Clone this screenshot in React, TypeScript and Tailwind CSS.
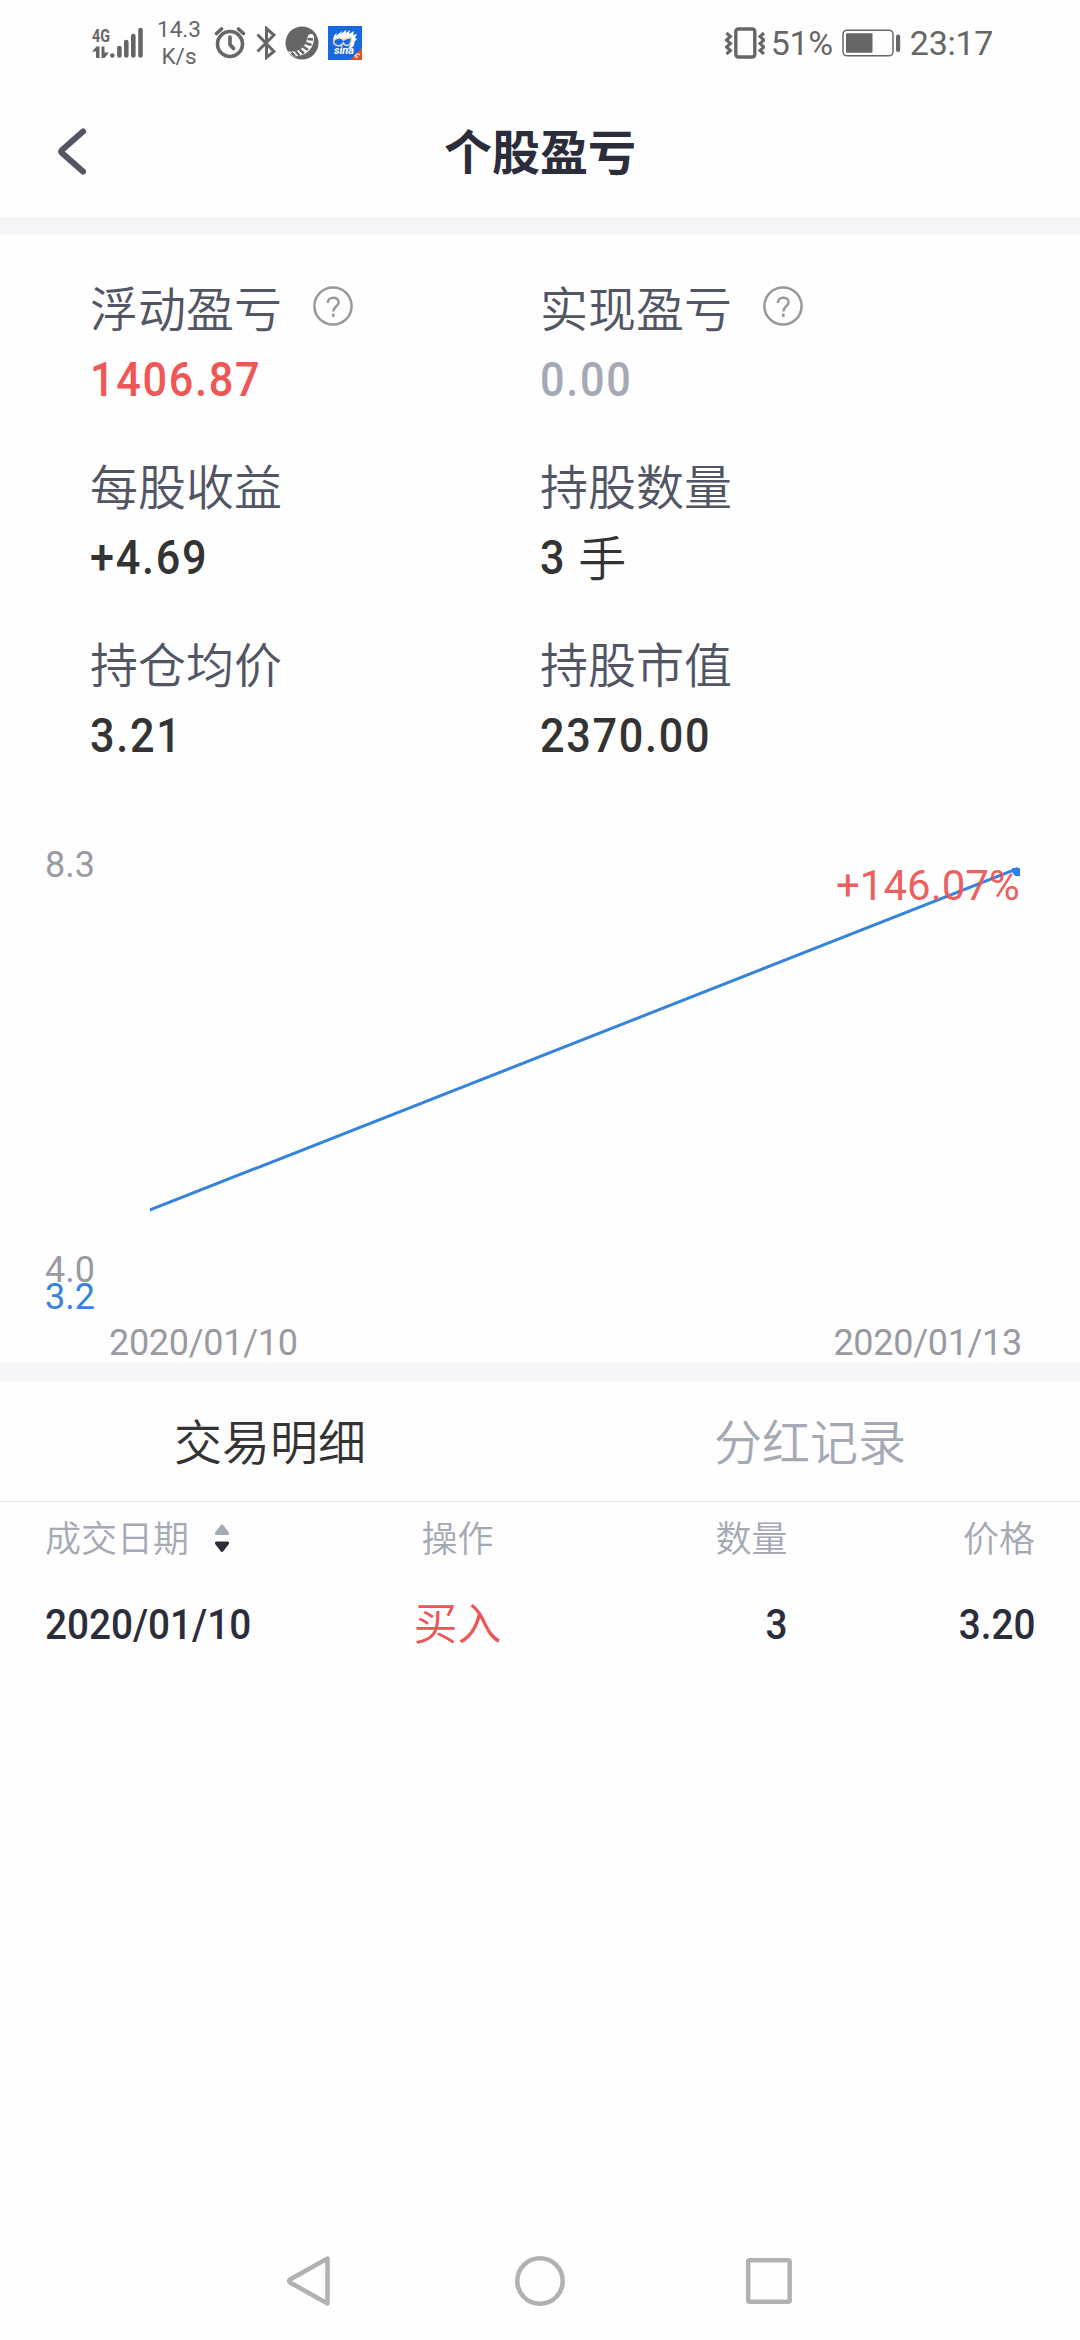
interface Stat {
  label: string;
  value: string;
  unit?: string;
  help?: boolean;
  tone?: "up" | "flat";
}

const stats: Stat[] = [
  { label: "浮动盈亏", value: "1406.87", help: true, tone: "up" },
  { label: "实现盈亏", value: "0.00", help: true, tone: "flat" },
  { label: "每股收益", value: "+4.69" },
  { label: "持股数量", value: "3", unit: "手" },
  { label: "持仓均价", value: "3.21" },
  { label: "持股市值", value: "2370.00" },
];

const trades = [
  { date: "2020/01/10", action: "买入", amount: "3", price: "3.20" },
];

export default function App() {
  return (
    <div className="flex h-[2340px] w-[1080px] flex-col overflow-hidden bg-[#fefefe] font-['Roboto','Noto_Sans_CJK_SC',sans-serif]">
      <StatusBar />
      <header className="grid h-[132px] shrink-0 grid-cols-[1fr_auto_1fr] items-center pl-[56px]">
        <BackIcon />
        <h1 className="-ml-[56px] pt-[6px] text-[48px] leading-none font-bold text-[#2b2d3a]">
          个股盈亏
        </h1>
      </header>
      <Divider />
      <section className="grid h-[565px] shrink-0 grid-cols-[450px_1fr] content-start pt-[37px] pl-[90px]">
        {stats.map((stat) => (
          <StatCell key={stat.label} {...stat} />
        ))}
      </section>
      <ProfitChart />
      <Divider />
      <Tabs />
      <TradeTable />
      <NavBar />
    </div>
  );
}

function Divider() {
  return <div className="h-[18px] shrink-0 bg-[#f6f6f9]" />;
}

function StatCell({ label, value, unit, help, tone }: Stat) {
  const color =
    tone === "up"
      ? "text-[#f05656]"
      : tone === "flat"
        ? "text-[#a5a9b4]"
        : "text-[#333333]";
  return (
    <div className="h-[178px]">
      <div className="flex h-[72px] items-center gap-[31px] text-[48px] leading-none font-[350] text-[#525564]">
        <span className="pt-[5px]">{label}</span>
        {help && <HelpIcon />}
      </div>
      <div
        className={`flex h-[70px] items-center gap-[9px] pt-[2px] text-[48px] leading-none font-medium ${color}`}
      >
        <span className="origin-left scale-x-90 tracking-[1.9px]">{value}</span>
        {unit && <span className="pt-[3px] font-[350]">{unit}</span>}
      </div>
    </div>
  );
}

function ProfitChart() {
  return (
    <svg
      className="h-[563px] w-[1080px] shrink-0"
      viewBox="0 800 1080 563"
      fontSize="36"
      fill="#999aa2"
    >
      <clipPath id="plot">
        <rect x="150" y="800" width="870" height="520" />
      </clipPath>
      <text x="45" y="877">8.3</text>
      <text x="45" y="1282">4.0</text>
      <text x="45" y="1308.500" fill="#3583dc">3.2</text>
      <text x="109" y="1355" letterSpacing="-0.3">2020/01/10</text>
      <text x="1022" y="1355" letterSpacing="-0.3" textAnchor="end">2020/01/13</text>
      <g clipPath="url(#plot)">
        <path d="M146 1211.500 1018 868.500" stroke="#3583dc" strokeWidth="3" />
        <path d="M1012 868h10v8h-7l-3-4Z" fill="#2b82ee" />
        <text x="836" y="900" fontSize="42" fill="#ec5656" fillOpacity="0.95">
          +146.07%
        </text>
      </g>
    </svg>
  );
}

function Tabs() {
  return (
    <div className="grid h-[121px] shrink-0 grid-cols-2 items-center border-b border-[#e6e6e8] pt-[6px] text-center text-[48px] leading-none font-[350]">
      <button className="text-[#333333]">交易明细</button>
      <button className="text-[#a5a9b4]">分红记录</button>
    </div>
  );
}

function TradeTable() {
  return (
    <div className="flex-1 px-[45px]">
      <div className="grid h-[72px] grid-cols-[4fr_2fr_3fr_3fr] items-center text-[36px] leading-none font-[350] text-[#a5a9b4]">
        <span className="flex items-center gap-[25px]">
          <span className="pt-[3px]">成交日期</span>
          <SortIcon />
        </span>
        <span className="pt-[3px] text-center">操作</span>
        <span className="pt-[3px] text-right">数量</span>
        <span className="pt-[3px] text-right">价格</span>
      </div>
      {trades.map((t) => (
        <div
          key={t.date}
          className="grid h-[100px] grid-cols-[4fr_2fr_3fr_3fr] items-center text-[43px] leading-none font-medium text-[#2b2d3a]"
        >
          <span className="origin-left scale-x-90">{t.date}</span>
          <span className="pt-[2px] text-center text-[44px] font-[350] text-[#ec5656]">
            {t.action}
          </span>
          <span className="origin-right scale-x-90 text-right">{t.amount}</span>
          <span className="origin-right scale-x-90 text-right">{t.price}</span>
        </div>
      ))}
    </div>
  );
}

function StatusBar() {
  return (
    <div className="flex h-[85px] shrink-0 items-center justify-between pr-[87px] pl-[91px] text-[#666666]">
      <div className="flex items-center">
        <SignalIcon />
        <div className="ml-[12px] w-[46px] text-center text-[22.500px] leading-[27px]">
          <div>14.3</div>
          <div>K/s</div>
        </div>
        <AlarmIcon />
        <BluetoothIcon />
        <CentipedeIcon />
        <SinaIcon />
      </div>
      <div className="flex items-center text-[34px] leading-none">
        <VibrateIcon />
        <span className="ml-[6px] w-[64px] tracking-[-0.4px]">51%</span>
        <BatteryIcon />
        <span className="ml-[8px] tracking-[-0.3px]">23:17</span>
      </div>
    </div>
  );
}

function NavBar() {
  return (
    <nav className="flex h-[118px] shrink-0 items-center justify-between px-[285px]">
      <svg className="h-[52px] w-[52px]" viewBox="0 0 52 52" fill="none" stroke="#b1b1b1" strokeWidth="4.500" strokeLinejoin="round">
        <path d="M42.500 3.500v45L5 27.500q-2-1.500 0-3Z" />
      </svg>
      <svg className="h-[52px] w-[52px]" viewBox="0 0 52 52" fill="none" stroke="#b1b1b1" strokeWidth="4.500">
        <circle cx="26" cy="26" r="22.700" />
      </svg>
      <svg className="h-[52px] w-[52px]" viewBox="0 0 52 52" fill="none" stroke="#b1b1b1" strokeWidth="4.500">
        <rect x="5.200" y="5.200" width="41.500" height="41.500" rx="1.500" />
      </svg>
    </nav>
  );
}

function BackIcon() {
  return (
    <svg className="h-[50px] w-[32px]" viewBox="0 0 32 50" fill="none" stroke="#525564" strokeWidth="6" strokeLinecap="round" strokeLinejoin="round">
      <path d="M27 5.500 6 24q-1.500 1.500 0 3L27 45.500" />
    </svg>
  );
}

function HelpIcon() {
  return (
    <svg className="-mt-[4px] h-[40px] w-[40px]" viewBox="0 0 40 40" fill="none" stroke="#999999" strokeWidth="2.500">
      <circle cx="20" cy="20" r="18.600" />
      <path d="M14.800 17c0-7 10.800-7 10.800-.7 0 4-5.300 4-5.300 9.200M20.300 27.500v3.400" />
    </svg>
  );
}

function SortIcon() {
  return (
    <svg className="h-[30px] w-[16px]" viewBox="0 0 16 30">
      <path d="M8 1.500q.8 0 1.500 1l5 6.500q1.500 3-1 3h-11q-2.500 0-1-3l5-6.500q.7-1 1.500-1Z" fill="#a5a9b4" />
      <path d="M8 29q-.8 0-1.500-1l-5-6.500q-1.500-3 1-3h11q2.500 0 1 3l-5 6.500q-.7 1-1.500 1Z" fill="#2b2d3a" />
    </svg>
  );
}

function SignalIcon() {
  return (
    <svg className="h-[34px] w-[53px]" viewBox="0 0 53 34" fill="currentColor">
      <text x="1" y="15.500" fontSize="19" fontWeight="700" textLength="18" lengthAdjust="spacingAndGlyphs">
        4G
      </text>
      <path d="M1 25.500 5.500 20.500H8.500V32H5V25.500H1ZM10.500 20.500h3v6h4.500l-4.500 5.500h-3Z" />
      <g stroke="currentColor" strokeWidth="4.600" strokeLinecap="round">
        <path d="M21.300 29.500v0M28.400 22v7.500M35.300 16v13.500M42.300 10v19.500M49.500 4v25.500" />
      </g>
    </svg>
  );
}

function AlarmIcon() {
  return (
    <svg className="ml-[12px] h-[34px] w-[32px]" viewBox="0 0 32 34" fill="none" stroke="currentColor" strokeWidth="3.600" strokeLinecap="round">
      <circle cx="16" cy="18" r="12.500" />
      <path d="M16 11v7.500l3.500 4M2.500 7.500 7.500 3M29.500 7.500 24.500 3" />
    </svg>
  );
}

function BluetoothIcon() {
  return (
    <svg className="ml-[10px] h-[34px] w-[20px]" viewBox="0 0 20 34" fill="none" stroke="currentColor" strokeWidth="3">
      <path d="M1.500 8.500 18 25.500 10.500 31.500V2.500L18 9 1.500 25.500" />
    </svg>
  );
}

function CentipedeIcon() {
  return (
    <svg className="ml-[9px] h-[34px] w-[34px]" viewBox="0 0 34 34" fill="none">
      <circle cx="17" cy="17" r="16.500" fill="currentColor" />
      <path d="M2.500 25.500Q20 27 22.500 11q1-3.500 4-3 3 .5 2.500 5.500-2 16-20.500 17" fill="#fefefe" />
      <path d="m6.500 26.500 3.500 3.500M10.500 25l4 4.500M14.500 23.500l4.500 4M18 20.500l5 3.500M20.500 17l6 2M22.500 13l5.500 .5" stroke="currentColor" strokeWidth="2.400" />
    </svg>
  );
}

function SinaIcon() {
  return (
    <svg className="ml-[9px] h-[34px] w-[34px]" viewBox="0 0 34 34">
      <rect width="34" height="34" fill="#1769e0" />
      <path d="M5 15q0-6 4-8l-1 3 6-5-1 3 5-4v3l4-3-1 4 5-3-1 4 4-1-2 4 2 1-2.500 3q0 7-7.500 7 4-3 3.500-7-7-5-17.500-1Z" fill="#fff" />
      <path d="M6 14q6-4 9.500 0 3.500-2.500 8-2 0 7-4.500 7.500-2.500 0-3.500-2.500-2.500 3.500-6.500 2.500Q4.500 18 6 14Z" fill="#1769e0" stroke="#e8d8bd" strokeWidth="1.600" />
      <path d="M22 34 34 22V34Z" fill="#e2501c" />
      <path d="m26.500 30.500 2.500-2.500M28 32l1.500-1.500M29.500 27.500l2.500 1.500" stroke="#fff" strokeWidth="1.200" />
      <text x="6" y="28" fontSize="10" fontWeight="700" fontStyle="italic" fill="#fff" textLength="20" lengthAdjust="spacingAndGlyphs">
        sina
      </text>
    </svg>
  );
}

function VibrateIcon() {
  return (
    <svg className="h-[34px] w-[40px]" viewBox="0 0 40 34" fill="none" stroke="currentColor" strokeWidth="3.400">
      <rect x="10.800" y="3" width="19" height="28" rx="2.500" />
      <path d="m1.500 7 4 3.500-4 3.500 4 3.500-4 3.500 4 3.500-4 3.500M39 7l-4 3.500 4 3.500-4 3.500 4 3.500-4 3.500 4 3.500" strokeWidth="3" />
    </svg>
  );
}

function BatteryIcon() {
  return (
    <svg className="ml-[7px] h-[28px] w-[60px]" viewBox="0 0 60 28">
      <rect x="1" y="1.200" width="50" height="25.600" rx="4" fill="none" stroke="currentColor" strokeWidth="1.500" />
      <rect x="4" y="4.300" width="26.500" height="19.500" rx="1" fill="currentColor" />
      <rect x="54" y="5.500" width="4.200" height="17.500" rx="2" fill="currentColor" />
    </svg>
  );
}
